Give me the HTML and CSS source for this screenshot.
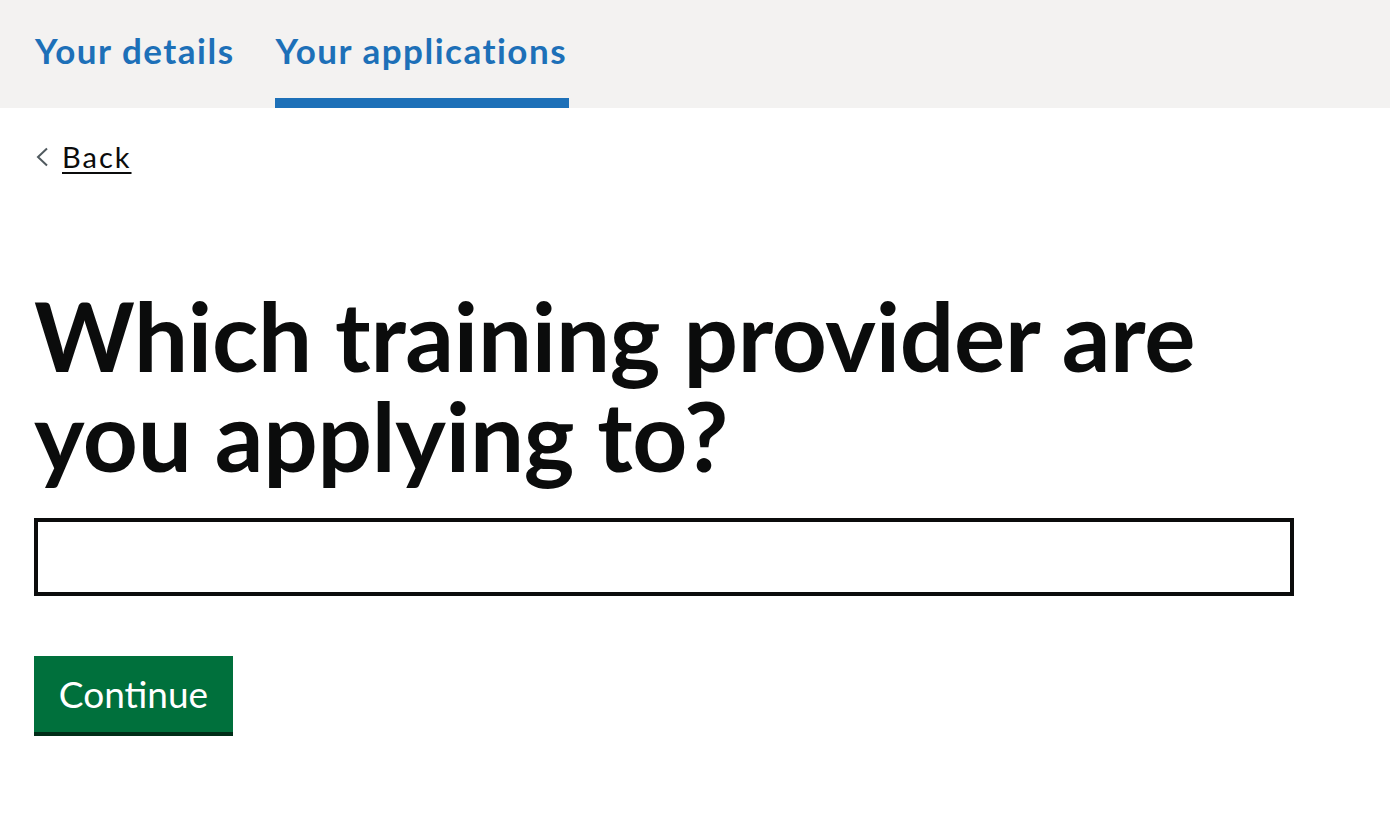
FILE: index.html
```html
<!DOCTYPE html>
<html lang="en">
<head>
<meta charset="utf-8">
<title>Which training provider are you applying to?</title>
<link rel="stylesheet" href="styles.css">
</head>
<body>
<header class="subnav">
  <nav class="subnav-list">
    <a class="subnav-link" href="#">Your details</a>
    <a class="subnav-link is-active" href="#">Your applications</a>
  </nav>
</header>
<main class="page">
  <a class="back-link" href="#">
    <svg class="back-chevron" width="14" height="20" viewBox="0 0 14 20" aria-hidden="true"><polyline points="11,1.5 2,10 11,18.5" fill="none" stroke="#505a5f" stroke-width="2"/></svg>
    <span class="back-text">Back</span>
  </a>
  <h1 class="heading">Which training provider are<br>you applying to?</h1>
  <input class="text-input" type="text" aria-label="Training provider">
  <button class="button" type="button">Continue</button>
</main>
</body>
</html>
```
FILE: styles.css
```css
html, body {
  margin: 0;
  padding: 0;
  background: #ffffff;
  font-family: Lato, "Noto Sans", "Liberation Sans", sans-serif;
  color: #0b0c0c;
}

.subnav {
  background: #f3f2f1;
  height: 108px;
  padding-left: 34px;
  box-sizing: border-box;
}

.subnav-list {
  display: flex;
  gap: 38px;
  height: 108px;
}

.subnav-link {
  display: block;
  font-size: 35px;
  font-weight: 700;
  line-height: 40px;
  letter-spacing: 1.5px;
  color: #1d70b8;
  text-decoration: none;
  padding: 30px 2px 28px 1px;
  border-bottom: 10px solid transparent;
}

.subnav-link.is-active {
  border-bottom-color: #1d70b8;
}

.page {
  padding-left: 34px;
  display: flex;
  flex-direction: column;
  align-items: flex-start;
}

.back-link {
  margin-top: 32px;
  display: flex;
  align-items: center;
  gap: 12px;
  color: #0b0c0c;
  text-decoration: none;
  font-size: 29px;
  line-height: 34px;
}

.back-chevron {
  display: block;
  margin-left: 2px;
  margin-top: -1px;
}

.back-text {
  letter-spacing: 2px;
  margin-right: -2px;
  text-decoration: underline;
  text-decoration-thickness: 2px;
  text-underline-offset: 4px;
}

.heading {
  margin: 111px 0 0 0;
  font-size: 96px;
  font-weight: 700;
  line-height: 100px;
  letter-spacing: -0.25px;
}

.text-input {
  margin-top: 33px;
  width: 1260px;
  height: 78px;
  box-sizing: border-box;
  border: 4px solid #0b0c0c;
  border-radius: 0;
  background: #fff;
  font-family: inherit;
  font-size: 32px;
  padding: 0 10px;
  outline: none;
}

.button {
  margin-top: 60px;
  width: 199px;
  height: 80px;
  box-sizing: border-box;
  border: 0;
  border-bottom: 4px solid #002d18;
  border-radius: 0;
  background: #00703c;
  color: #ffffff;
  font-family: inherit;
  font-size: 37px;
  line-height: 76px;
  padding: 0;
  cursor: pointer;
}
```
